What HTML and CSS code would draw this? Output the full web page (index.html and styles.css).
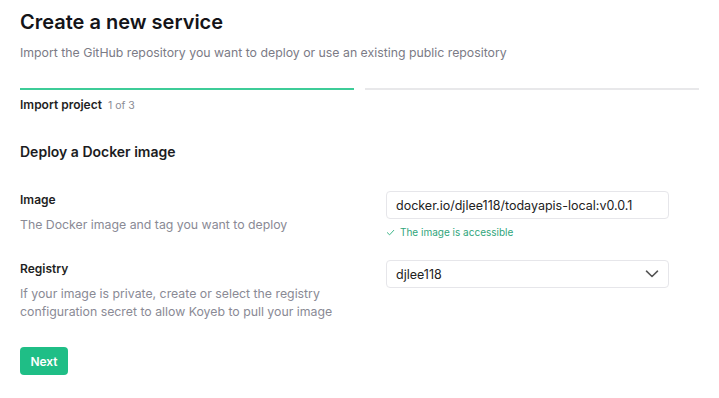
FILE: index.html
```html
<!DOCTYPE html>
<html>
<head>
<meta charset="utf-8">
<link rel="stylesheet" href="styles.css">
</head>
<body>
<div class="page">
  <h1 class="title">Create a new service</h1>
  <p class="subtitle">Import the GitHub repository you want to deploy or use an existing public repository</p>

  <div class="steps">
    <div class="step active">
      <div class="bar"></div>
      <div class="step-label"><span class="step-name">Import project</span><span class="step-count">1 of 3</span></div>
    </div>
    <div class="step">
      <div class="bar"></div>
    </div>
  </div>

  <h2 class="section">Deploy a Docker image</h2>

  <div class="row row-image">
    <div class="info">
      <div class="label">Image</div>
      <div class="desc">The Docker image and tag you want to deploy</div>
    </div>
    <div class="control">
      <div class="input">docker.io/djlee118/todayapis-local:v0.0.1</div>
      <div class="ok"><svg class="check" viewBox="0 0 10 10" width="9" height="9"><path d="M1.5 5.2 L4 7.6 L8.6 2.6" fill="none" stroke="currentColor" stroke-width="1.1" stroke-linecap="round" stroke-linejoin="round"/></svg>The image is accessible</div>
    </div>
  </div>

  <div class="row row-registry">
    <div class="info">
      <div class="label">Registry</div>
      <div class="desc">If your image is private, create or select the registry<br>configuration secret to allow Koyeb to pull your image</div>
    </div>
    <div class="control">
      <div class="input select"><span>djlee118</span><svg class="chev" viewBox="0 0 14 8" width="14" height="8"><path d="M1.5 1.2 L7 6.5 L12.5 1.2" fill="none" stroke="#555" stroke-width="1.6" stroke-linecap="round" stroke-linejoin="round"/></svg></div>
    </div>
  </div>

  <button class="next">Next</button>
</div>
</body>
</html>
```
FILE: styles.css
```css
* { box-sizing: border-box; }
html, body { margin: 0; padding: 0; background: #fff; }
body { font-family: Inter, "Noto Sans", sans-serif; color: #1a1a1f; }
.page { padding: 8px 20px 0 20px; }
.title { margin: 0; font-size: 20px; font-weight: 600; line-height: 28px; letter-spacing: 0; color: #141418; }
.subtitle { margin: 8px 0 0 0; font-size: 12.3px; line-height: 18px; color: #7b7b86; }
.steps { display: flex; gap: 11px; margin-top: 26px; }
.step { flex: 1; }
.bar { height: 2px; background: #e8e8ea; }
.step.active .bar { background: #3dcc98; }
.step-label { margin-top: 7px; display: flex; align-items: baseline; gap: 6px; }
.step-name { font-size: 12px; font-weight: 600; color: #1f1f24; }
.step-count { font-size: 10.5px; color: #8a8a94; }
.section { margin: 30px 0 0 0; font-size: 14px; font-weight: 600; line-height: 20px; color: #1c1c22; }
.row { display: grid; grid-template-columns: 1fr 283px; column-gap: 20px; padding-right: 30px; }
.row-image { margin-top: 29px; }
.row-registry { margin-top: 22px; }
.label { font-size: 12px; font-weight: 600; line-height: 18px; color: #1f1f24; }
.desc { margin-top: 7px; font-size: 12.3px; line-height: 18px; color: #8a8a95; }
.input { height: 28px; border: 1px solid #e6e6ea; border-radius: 4px; padding: 0 9px; display: flex; align-items: center; font-size: 12.5px; color: #222; }
.select { justify-content: space-between; padding-right: 9px; }
.ok { margin-top: 7px; display: flex; align-items: center; gap: 5px; font-size: 10px; color: #2fa57b; }
.check { color: #3bb487; }
.next { margin-top: 26px; height: 28px; width: 48px; border: none; border-radius: 4px; background: #1fbe86; color: #fff; font-family: Inter, sans-serif; font-size: 12px; font-weight: 600; padding: 0; }
```
